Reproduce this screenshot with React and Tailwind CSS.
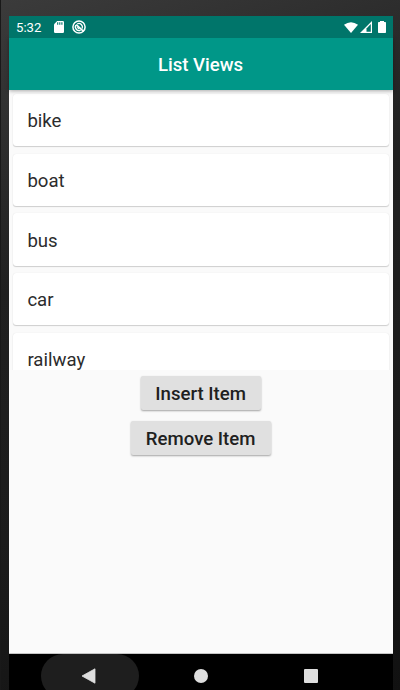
import React from "react";

const items = ["bike", "boat", "bus", "car", "railway"];

function StatusBar() {
  return (
    <div className="z-20 flex h-[22px] shrink-0 items-center bg-[#00756a] pl-[7px] pr-[7px] text-white">
      <span className="w-[27.5px] pt-px text-[13.2px] leading-[22px]">5:32</span>
      <svg className="ml-[10px]" width="10" height="12" viewBox="0 0 10 12">
        <path d="M3.2 0H8.8Q10 0 10 1.2V10.8Q10 12 8.8 12H1.2Q0 12 0 10.8V3.2Z" fill="#fff" />
        <path d="M3.7 1.2V3.7M5.8 1.2V3.7M7.9 1.2V3.7" stroke="#00756a" strokeWidth="1.1" />
      </svg>
      <svg className="ml-[8.5px]" width="14" height="14" viewBox="0 0 14 14" fill="none" stroke="#fff">
        <circle cx="7" cy="7" r="6.1" strokeWidth="1.5" />
        <path d="M8.6 10.2A3.6 3.6 0 0 1 3.9 5.2M5.3 3.8A3.6 3.6 0 0 1 10.2 8.4" strokeWidth="1.4" />
        <path d="M4.2 4.6L11.6 11.4" strokeWidth="1.6" />
        <path d="M5.3 7.3L7.2 9" strokeWidth="1.2" />
      </svg>
      <div className="flex-1" />
      <svg width="14" height="11" viewBox="0 0 14 11">
        <path d="M0 2.8Q7-2.3 14 2.8L7 11Z" fill="#fff" />
      </svg>
      <svg className="ml-[1.5px]" width="12" height="12" viewBox="0 0 12 12">
        <path d="M12 0V12H0Z" fill="#fff" />
        <path d="M10.8 3V10.8H6.5V7.4Z" fill="#00756a" />
      </svg>
      <svg className="ml-[6.5px]" width="8" height="12" viewBox="0 0 8 12">
        <path d="M2 1V0H6V1H7.2Q8 1 8 1.8V11.2Q8 12 7.2 12H.8Q0 12 0 11.2V1.8Q0 1 .8 1Z" fill="#fff" />
      </svg>
    </div>
  );
}

function NavBar() {
  return (
    <div className="flex h-9 shrink-0 overflow-hidden bg-black pl-8">
      <div className="flex h-11 shrink-0 items-center">
        <div className="flex h-11 w-[97.5px] items-center justify-center rounded-[22px] bg-[#1e1e1e] pr-[3.5px]">
          <svg width="15" height="16" viewBox="0 0 15 16">
            <path d="M1 8L14 .8V15.2Z" fill="#dedede" stroke="#dedede" strokeWidth=".8" strokeLinejoin="round" />
          </svg>
        </div>
        <div className="ml-[55px] size-[14px] rounded-full bg-[#dedede]" />
        <div className="ml-[96px] h-[14px] w-[14.5px] rounded-[1px] bg-[#dedede]" />
      </div>
    </div>
  );
}

function ActionButton({ children }) {
  return (
    <button className="h-[33.5px] rounded-[2px] bg-[#e0e0e0] pr-[15.5px] pl-[14.8px] text-[18.6px] leading-[36px] font-medium text-[#202020] shadow-[0_1px_2px_rgba(0,0,0,0.35)]">
      {children}
    </button>
  );
}

export default function App() {
  return (
    <div className="h-[690px] w-[400px] overflow-hidden border-l border-[#191919] bg-[linear-gradient(160deg,#3b3b3b_0%,#202020_35%,#1c1c1c_65%,#111_100%)] pt-4 pr-[7px] pl-[8px] font-[Roboto,sans-serif]">
      <div className="flex h-[674px] w-[384px] flex-col bg-[#fafafa]">
        <StatusBar />
        <header className="z-10 flex h-[52px] shrink-0 items-center justify-center bg-[#009788] pt-[3px] pr-[1px] text-[18.6px] font-medium text-white shadow-[0_1px_4px_rgba(0,0,0,0.32)]">
          List Views
        </header>
        <ul className="flex h-[280px] shrink-0 flex-col gap-[7.5px] overflow-hidden px-[3.7px] pt-[4px]">
          {items.map((item) => (
            <li
              key={item}
              className="flex h-[52.2px] shrink-0 items-center rounded-[3px] bg-white pt-[4px] pl-[14.7px] text-[18.6px] text-[#2c2c2c] shadow-[0_1px_1px_rgba(0,0,0,0.17),0_0_1px_rgba(0,0,0,0.12)]"
            >
              {item}
            </li>
          ))}
        </ul>
        <div className="flex flex-1 flex-col items-center gap-[11.3px] border-b border-[#c5c5c5] pt-[6.3px]">
          <ActionButton>Insert Item</ActionButton>
          <ActionButton>Remove Item</ActionButton>
        </div>
        <NavBar />
      </div>
    </div>
  );
}
